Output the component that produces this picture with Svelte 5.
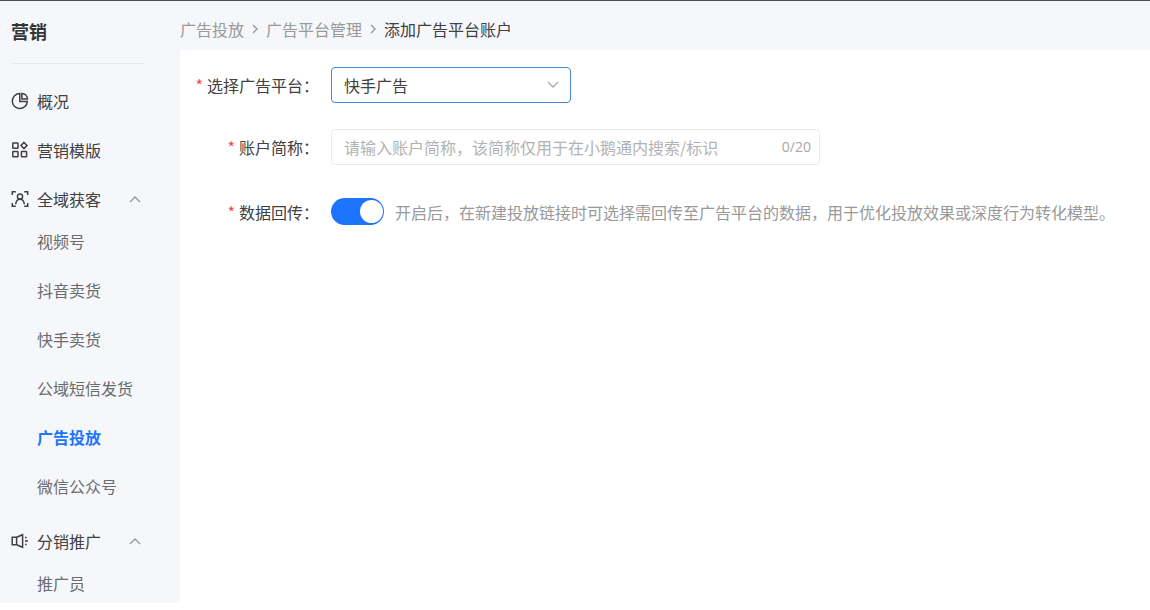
<script>
  const platforms = ["快手广告", "巨量引擎", "腾讯广告"];
  const maxLength = 20;

  const menu = [
    { name: "概况", icon: "pie" },
    { name: "营销模版", icon: "blocks" },
    {
      name: "全域获客",
      icon: "person",
      children: [
        "视频号",
        "抖音卖货",
        "快手卖货",
        "公域短信发货",
        "广告投放",
        "微信公众号",
      ],
    },
    { name: "分销推广", icon: "speaker", children: ["推广员"] },
  ];

  let active = "广告投放";
  let closed = {};

  let platform = platforms[0];
  let accountName = "";
  let sendBack = true;

  const toggle = (name) => {
    closed = { ...closed, [name]: !closed[name] };
  };
</script>

<div class="page">
  <aside class="sidebar">
    <h1 class="title">营销</h1>
    <nav>
      <ul class="menu">
        {#each menu as item}
          <li class:group={item.children}>
            <button
              class="menu-item"
              aria-expanded={item.children ? !closed[item.name] : undefined}
              on:click={() => item.children && toggle(item.name)}
            >
              <svg class="icon" viewBox="0 0 18 18" aria-hidden="true">
                {#if item.icon === "pie"}
                  <path d="M8.8 1.6A7.5 7.5 0 1 0 16.3 9.4H8.8z" />
                  <path d="M10.9 1.4v5.6h5.6a6 6 0 0 0-5.6-5.6z" />
                {:else if item.icon === "blocks"}
                  <rect x="1.8" y="2" width="5.2" height="5.2" rx="0.5" />
                  <rect x="1.8" y="10.6" width="5.2" height="5.2" rx="0.5" />
                  <rect x="10.4" y="10.6" width="5.2" height="5.2" rx="0.5" />
                  <path d="M13 1.4l3 3.1-3 3.1-3-3.1z" />
                {:else if item.icon === "person"}
                  <path
                    d="M1.3 5V1.7h3.5M13.2 1.7h3.5V5M1.3 13v3.3h3.5M13.2 16.3h3.5V13"
                  />
                  <circle cx="9" cy="6.5" r="2.6" />
                  <path d="M4.7 14.2c.3-3 2-5 4.3-5s4 2 4.3 5" />
                {:else}
                  <path d="M1.2 5.2h4.4v7.6H1.2zM5.6 5.2l6-2.5v12.6l-6-2.5" />
                  <path d="M14 5.5h1.6M14 9h3M14 12.5h1.6" />
                {/if}
              </svg>
              <span>{item.name}</span>
              {#if item.children}
                <svg
                  class="arrow"
                  class:down={closed[item.name]}
                  viewBox="0 0 12 12"
                  aria-hidden="true"
                >
                  <path d="M1 9l5-5 5 5" />
                </svg>
              {/if}
            </button>
            {#if item.children && !closed[item.name]}
              <ul class="submenu">
                {#each item.children as child}
                  <li>
                    <a
                      href="#{child}"
                      class:active={child === active}
                      on:click|preventDefault={() => (active = child)}
                      >{child}</a
                    >
                  </li>
                {/each}
              </ul>
            {/if}
          </li>
        {/each}
      </ul>
    </nav>
  </aside>

  <main>
    <nav class="breadcrumb" aria-label="breadcrumb">
      <a href="#ads">广告投放</a>
      <svg viewBox="0 0 10 12" aria-hidden="true"><path d="M3 2l4 4-4 4" /></svg>
      <a href="#platforms">广告平台管理</a>
      <svg viewBox="0 0 10 12" aria-hidden="true"><path d="M3 2l4 4-4 4" /></svg>
      <span class="current">添加广告平台账户</span>
    </nav>

    <form on:submit|preventDefault>
      <div class="row">
        <label for="platform">选择广告平台：</label>
        <div class="select-box">
          <select id="platform" bind:value={platform}>
            {#each platforms as name}
              <option>{name}</option>
            {/each}
          </select>
          <svg viewBox="0 0 12 12" aria-hidden="true">
            <path d="M1 3l5 5 5-5" />
          </svg>
        </div>
      </div>

      <div class="row">
        <label for="account">账户简称：</label>
        <div class="input-box">
          <input
            id="account"
            type="text"
            maxlength={maxLength}
            placeholder="请输入账户简称，该简称仅用于在小鹅通内搜索/标识"
            bind:value={accountName}
          />
          <span class="count">{accountName.length}/{maxLength}</span>
        </div>
      </div>

      <div class="row switch-row">
        <label for="send-back">数据回传：</label>
        <input
          id="send-back"
          class="switch"
          type="checkbox"
          aria-describedby="send-back-tip"
          bind:checked={sendBack}
        />
        <p id="send-back-tip" class="tip">
          开启后，在新建投放链接时可选择需回传至广告平台的数据，用于优化投放效果或深度行为转化模型。
        </p>
      </div>
    </form>
  </main>
</div>

<style>
  :global(body) {
    background: #fff;
  }
  .page {
    box-sizing: border-box;
    display: flex;
    min-height: 100vh;
    padding-bottom: 7px;
    border-top: 1px solid #4b4a57;
    font-family: "Noto Sans CJK SC", "Microsoft YaHei", sans-serif;
    font-size: 16px;
    line-height: 24px;
    color: #404040;
  }
  .page * {
    box-sizing: border-box;
  }
  ul {
    list-style: none;
    margin: 0;
    padding: 0;
  }
  button,
  input,
  select {
    font: inherit;
    color: inherit;
  }
  a {
    color: inherit;
    text-decoration: none;
  }
  svg {
    flex: none;
    fill: none;
    stroke: currentColor;
  }

  .sidebar {
    flex: none;
    width: 180px;
    padding: 0 36px 0 11px;
    background: #f5f7fb;
  }
  .title {
    margin: 0 0 19px;
    padding-bottom: 2px;
    font-size: 18px;
    line-height: 60px;
    color: #333;
    border-bottom: 1px solid #e6e8ec;
  }
  .menu,
  .submenu {
    display: flex;
    flex-direction: column;
    gap: 13px;
  }
  .group + .group {
    margin-top: 6px;
  }
  .menu-item {
    display: flex;
    align-items: center;
    gap: 8px;
    width: 100%;
    height: 36px;
    padding: 0 3px 0 0;
    border: none;
    background: none;
    text-align: left;
    cursor: pointer;
  }
  .icon {
    width: 18px;
    height: 18px;
    stroke-width: 1.5;
  }
  .arrow {
    width: 12px;
    height: 12px;
    margin-left: auto;
    color: #999;
    stroke-width: 1.4;
  }
  .arrow.down {
    transform: rotate(180deg);
  }
  .submenu {
    margin-top: 6px;
    padding-left: 26px;
    color: #6c6c6c;
  }
  .submenu a {
    display: block;
    line-height: 36px;
    white-space: nowrap;
  }
  .submenu a.active {
    color: #1c75ff;
    font-weight: bold;
  }

  main {
    flex: 1;
    min-width: 0;
    display: flex;
    flex-direction: column;
    background: #fff;
  }
  .breadcrumb {
    display: flex;
    align-items: center;
    gap: 6px;
    height: 49px;
    padding-top: 7px;
    color: #999;
    background: #f5f7fb;
  }
  .breadcrumb svg {
    width: 10px;
    height: 12px;
    stroke-width: 1.4;
  }
  .current {
    color: #404040;
  }

  form {
    display: flex;
    flex-direction: column;
    gap: 26px;
    padding: 17px 20px 17px 0;
  }
  .row {
    display: flex;
    align-items: center;
    min-height: 36px;
  }
  .switch-row {
    min-height: 41px;
  }
  label {
    flex: none;
    width: 139px;
    margin-right: 12px;
    text-align: right;
  }
  label::before {
    content: "*";
    margin-right: 4px;
    color: #f0464e;
  }
  .select-box {
    position: relative;
    width: 240px;
  }
  select {
    display: block;
    width: 100%;
    height: 36px;
    padding: 0 32px 0 12px;
    appearance: none;
    border: 1px solid #4a86dc;
    border-radius: 4px;
    background: #fff;
    outline: none;
  }
  .select-box svg {
    position: absolute;
    top: 12px;
    right: 12px;
    width: 12px;
    height: 12px;
    color: #aaa;
    stroke-width: 1.4;
    pointer-events: none;
  }
  .input-box {
    display: flex;
    align-items: center;
    flex: 0 1 489px;
    height: 36px;
    padding: 0 8px 0 12px;
    border: 1px solid #ebebeb;
    border-radius: 4px;
  }
  .input-box input {
    flex: 1;
    min-width: 0;
    padding: 0;
    border: none;
    outline: none;
    background: none;
  }
  input::placeholder {
    color: #b2b2b2;
    opacity: 1;
  }
  .count {
    font-family: "Open Sans", sans-serif;
    font-size: 14px;
    color: #a6a6a6;
  }
  .switch {
    position: relative;
    flex: none;
    width: 53px;
    height: 27px;
    margin: 0 11px 0 0;
    appearance: none;
    border-radius: 14px;
    background: #bbb;
    cursor: pointer;
  }
  .switch:checked {
    background: #1c75ff;
  }
  .switch::before {
    content: "";
    position: absolute;
    top: 2px;
    left: 2px;
    width: 23px;
    height: 23px;
    border-radius: 50%;
    background: #fff;
  }
  .switch:checked::before {
    left: 29px;
  }
  .tip {
    margin: 0;
    color: #999;
  }
</style>
